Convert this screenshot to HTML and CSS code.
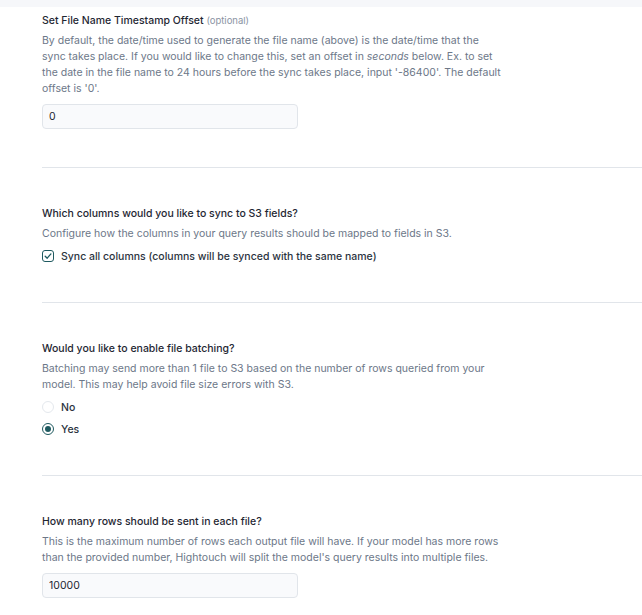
FILE: index.html
```html
<!DOCTYPE html>
<html>
<head>
  <title>S3 Sync Settings</title>
  <link rel="stylesheet" href="styles.css">
</head>
<body>
  <div class="topbar"></div>
  <div class="form">
    <div class="section first">
      <div class="label">Set File Name Timestamp Offset <span class="optional">(optional)</span></div>
      <p class="desc">By default, the date/time used to generate the file name (above) is the date/time that the sync takes place. If you would like to change this, set an offset in <em>seconds</em> below. Ex. to set the date in the file name to 24 hours before the sync takes place, input '-86400'. The default offset is '0'.</p>
      <input class="text-input" type="text" value="0">
    </div>

    <div class="section">
      <div class="label">Which columns would you like to sync to S3 fields?</div>
      <p class="desc">Configure how the columns in your query results should be mapped to fields in S3.</p>
      <div class="option">
        <span class="checkbox">
          <svg width="10" height="10" viewBox="0 0 10 10"><path d="M2.2 5.2 L4.2 7.2 L7.9 2.9" fill="none" stroke="#1f5a60" stroke-width="1.3" stroke-linecap="round" stroke-linejoin="round"/></svg>
        </span>
        <span>Sync all columns (columns will be synced with the same name)</span>
      </div>
    </div>

    <div class="section">
      <div class="label">Would you like to enable file batching?</div>
      <p class="desc">Batching may send more than 1 file to S3 based on the number of rows queried from your model. This may help avoid file size errors with S3.</p>
      <div class="option radio-row">
        <span class="radio"></span>
        <span>No</span>
      </div>
      <div class="option radio-row">
        <span class="radio checked"></span>
        <span>Yes</span>
      </div>
    </div>

    <div class="section last">
      <div class="label">How many rows should be sent in each file?</div>
      <p class="desc">This is the maximum number of rows each output file will have. If your model has more rows than the provided number, Hightouch will split the model's query results into multiple files.</p>
      <input class="text-input" type="text" value="10000">
    </div>
  </div>
</body>
</html>
```

FILE: styles.css
```css
body {
  margin: 0;
  background-color: white;
  font-family: Inter, "Noto Sans", sans-serif;
  font-size: 10.5px;
  color: #1f2733;
}

.topbar {
  height: 7px;
  background-color: #f6f7fa;
}

.form {
  margin-left: 42px;
}

.section {
  padding: 38px 0 38px 0;
  border-bottom: 1px solid #e1e5ea;
}

.section.first {
  padding-top: 6px;
}

.section.last {
  border-bottom: none;
}

.label {
  font-weight: 500;
  line-height: 16px;
  margin-bottom: 4px;
}

.optional {
  font-weight: 400;
  font-size: 9.5px;
  color: #8a94a3;
}

.desc {
  margin: 0;
  max-width: 459px;
  line-height: 16px;
  color: #6c7788;
}

.text-input {
  display: block;
  box-sizing: border-box;
  width: 256px;
  height: 25px;
  margin-top: 7px;
  padding: 0 6px;
  border: 1px solid #e1e5ea;
  border-radius: 4px;
  background-color: #f9fafc;
  font-family: Inter, "Noto Sans", sans-serif;
  font-size: 10.5px;
  color: #1f2733;
}

.option {
  display: flex;
  align-items: center;
  gap: 7px;
  height: 16px;
  margin-top: 6px;
  font-weight: 500;
  color: #2b3340;
}

.radio-row + .radio-row {
  margin-top: 6px;
}

.checkbox {
  box-sizing: border-box;
  width: 12px;
  height: 12px;
  border: 1.3px solid #1f5a60;
  border-radius: 3px;
  display: flex;
  align-items: center;
  justify-content: center;
}

.radio {
  box-sizing: border-box;
  width: 12px;
  height: 12px;
  border: 1px solid #e4e8ed;
  border-radius: 50%;
  display: flex;
  align-items: center;
  justify-content: center;
}

.radio.checked {
  border-color: #1f5a60;
}

.radio.checked::after {
  content: "";
  width: 6px;
  height: 6px;
  border-radius: 50%;
  background-color: #1f5a60;
}
```
